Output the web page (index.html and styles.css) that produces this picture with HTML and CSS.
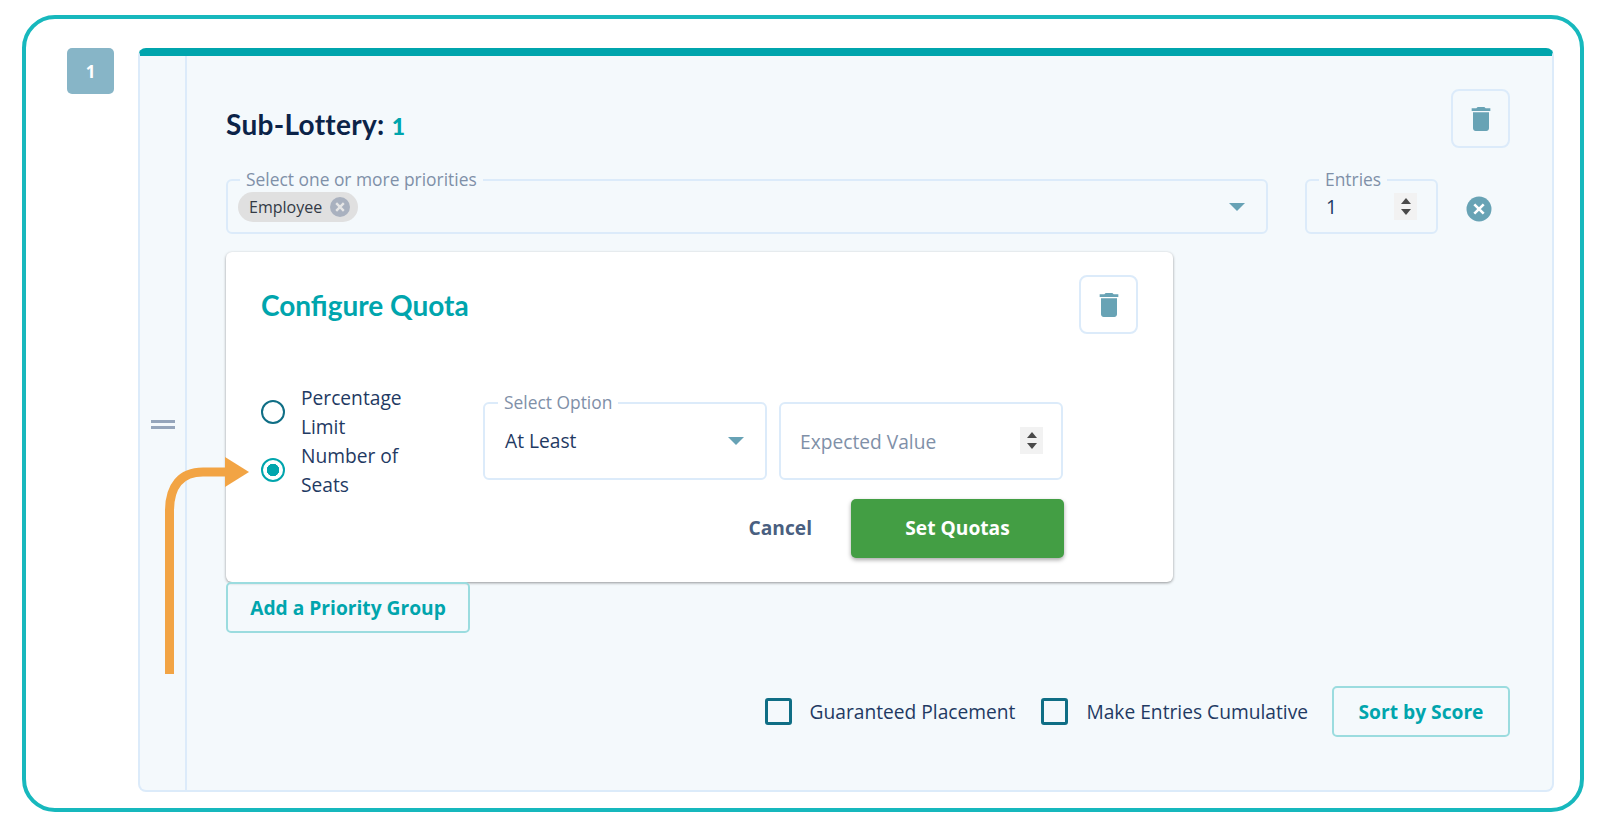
FILE: index.html

```html
<!DOCTYPE html>
<html lang="en">
<head>
    <meta charset="UTF-8">
    <meta name="viewport" content="width=device-width, initial-scale=1.0">
    <title>Sub-Lottery - Configure Quota</title>
    <link rel="stylesheet" href="styles.css">
</head>
<body>
    <div class="frame">
        <div class="order-badge">1</div>

        <div class="panel">
            <div class="handle-col">
                <div class="handle"></div>
            </div>

            <div class="panel-main">
                <div class="panel-head">
                    <h2 class="panel-title">Sub-Lottery: <span class="panel-num">1</span></h2>
                    <button class="icon-btn">
                        <svg viewBox="0 0 24 24" class="trash"><path d="M6 19c0 1.1.9 2 2 2h8c1.1 0 2-.9 2-2V7H6v12zM19 4h-3.5l-1-1h-5l-1 1H5v2h14V4z"/></svg>
                    </button>
                </div>

                <div class="priority-row">
                    <div class="field field-priorities">
                        <span class="field-label">Select one or more priorities</span>
                        <span class="chip">
                            Employee
                            <svg viewBox="0 0 20 20" class="chip-x"><circle cx="10" cy="10" r="10"/><path d="M6.2 6.2l7.6 7.6M13.8 6.2l-7.6 7.6"/></svg>
                        </span>
                        <span class="caret"></span>
                    </div>
                    <div class="field field-entries">
                        <span class="field-label">Entries</span>
                        <span class="field-value">1</span>
                        <span class="spinner"><i class="up"></i><i class="down"></i></span>
                    </div>
                    <svg viewBox="0 0 26 26" class="remove-x"><circle cx="13" cy="13" r="12.5"/><path d="M8.3 8.3l9.4 9.4M17.7 8.3l-9.4 9.4"/></svg>
                </div>

                <div class="quota-card">
                    <div class="quota-head">
                        <h2 class="quota-title">Configure Quota</h2>
                        <button class="icon-btn icon-btn-white">
                            <svg viewBox="0 0 24 24" class="trash"><path d="M6 19c0 1.1.9 2 2 2h8c1.1 0 2-.9 2-2V7H6v12zM19 4h-3.5l-1-1h-5l-1 1H5v2h14V4z"/></svg>
                        </button>
                    </div>

                    <div class="quota-body">
                        <div class="quota-row">
                            <div class="radio-group">
                                <label class="radio-item">
                                    <span class="radio"></span>
                                    <span class="radio-text">Percentage Limit</span>
                                </label>
                                <label class="radio-item">
                                    <span class="radio radio-on"></span>
                                    <span class="radio-text">Number of Seats</span>
                                </label>
                            </div>
                            <div class="field field-quota">
                                <span class="field-label label-white">Select Option</span>
                                <span class="field-value">At Least</span>
                                <span class="caret"></span>
                            </div>
                            <div class="field field-quota field-expected">
                                <span class="placeholder">Expected Value</span>
                                <span class="spinner"><i class="up"></i><i class="down"></i></span>
                            </div>
                        </div>
                        <div class="quota-actions">
                            <button class="btn-cancel">Cancel</button>
                            <button class="btn-set">Set Quotas</button>
                        </div>
                    </div>
                </div>

                <button class="btn-outline btn-add">Add a Priority Group</button>

                <div class="panel-foot">
                    <label class="check-item check-first"><span class="check"></span>Guaranteed Placement</label>
                    <label class="check-item"><span class="check"></span>Make Entries Cumulative</label>
                    <button class="btn-outline btn-sort">Sort by Score</button>
                </div>
            </div>
        </div>

        <!-- annotation drawn over the screenshot -->
        <svg class="arrow" viewBox="0 0 100 225">
            <path class="arrow-line" d="M18.5 223V60C18.5 35 30 21 52 21H76"/>
            <path class="arrow-head" d="M74 6L98 21L74 36Z"/>
        </svg>
    </div>
</body>
</html>
```

FILE: styles.css

```css
* {
    margin: 0;
    padding: 0;
    box-sizing: border-box;
}

body {
    font-family: 'Open Sans', 'Liberation Sans', sans-serif;
    background: #fff;
    color: #1f3a63;
    height: 827px;
    overflow: hidden;
}

button {
    font-family: inherit;
    cursor: pointer;
}

.frame {
    position: relative;
    display: flex;
    align-items: flex-start;
    width: 1562px;
    height: 797px;
    margin: 15px 0 0 22px;
    padding: 29px 26px 0 41px;
    border: 4px solid #17b8bd;
    border-radius: 33px;
}

.order-badge {
    flex: none;
    width: 47px;
    height: 46px;
    margin-right: 24px;
    display: flex;
    align-items: center;
    justify-content: center;
    background: #87b5c7;
    border-radius: 5px;
    color: #fff;
    font-size: 17px;
    font-weight: 700;
}

.panel {
    flex: 1;
    display: flex;
    height: 744px;
    background: #f4f9fc;
    border: 2px solid #dcebfa;
    border-top: 8px solid #00a5ad;
    border-radius: 8px;
}

.handle-col {
    flex: none;
    width: 47px;
    display: flex;
    align-items: center;
    justify-content: center;
    border-right: 2px solid #dcebfa;
    padding-top: 2px;
}

.handle {
    width: 24px;
    height: 9px;
    border-top: 3px solid #95a5bb;
    border-bottom: 3px solid #95a5bb;
}

.panel-main {
    flex: 1;
    padding: 33px 42px 0 39px;
}

.panel-head {
    display: flex;
    justify-content: space-between;
    align-items: center;
    height: 59px;
}

.panel-title {
    font-family: 'Lato', sans-serif;
    font-size: 28px;
    font-weight: 700;
    letter-spacing: 0.3px;
    color: #0b2348;
    margin-top: 11px;
}

.panel-num {
    color: #00a5ad;
    font-size: 23px;
    font-weight: 900;
}

.icon-btn {
    width: 59px;
    height: 59px;
    display: flex;
    align-items: center;
    justify-content: center;
    background: transparent;
    border: 2px solid #dcebfa;
    border-radius: 8px;
}

.icon-btn-white {
    background: #fff;
}

.trash {
    width: 32px;
    height: 32px;
    fill: #68a3b5;
}

.priority-row {
    display: flex;
    align-items: flex-start;
    margin-top: 31px;
}

.field {
    position: relative;
    display: flex;
    align-items: center;
    border: 2px solid #dcebfa;
    border-radius: 6px;
    font-size: 19.2px;
}

.field-label {
    position: absolute;
    top: -13px;
    padding: 0 6px;
    background: #f4f9fc;
    color: #7f90a8;
    font-size: 17.4px;
    line-height: 22px;
}

.label-white {
    background: #fff;
    left: 13px;
}

.field-priorities {
    width: 1042px;
    height: 55px;
    padding-left: 10px;
}

.field-priorities .field-label {
    left: 12px;
}

.field-entries {
    width: 133px;
    height: 55px;
    margin-left: 37px;
    padding-left: 19px;
}

.field-entries .field-label {
    left: 12px;
}

.field-value {
    color: #1f3a63;
    line-height: 1;
}

.chip {
    display: flex;
    align-items: center;
    height: 30px;
    padding: 0 8px 0 11px;
    background: #e0e0e0;
    border-radius: 15px;
    color: #333a45;
    font-size: 16px;
}

.chip-x {
    width: 20px;
    height: 20px;
    margin-left: 8px;
}

.chip-x circle {
    fill: #a9b1bf;
}

.chip-x path {
    stroke: #e6e6e6;
    stroke-width: 2.4;
    fill: none;
}

.caret {
    position: absolute;
    top: 50%;
    right: 21px;
    margin-top: -4px;
    border-left: 8px solid transparent;
    border-right: 8px solid transparent;
    border-top: 8px solid #67a2b5;
}

.spinner {
    position: absolute;
    top: 50%;
    right: 19px;
    width: 23px;
    height: 27px;
    margin-top: -14px;
    display: flex;
    flex-direction: column;
    align-items: center;
    justify-content: center;
    gap: 5px;
    background: #f2f2f2;
}

.spinner i {
    display: block;
    border-left: 5px solid transparent;
    border-right: 5px solid transparent;
}

.spinner .up {
    border-bottom: 6px solid #4a4a4a;
}

.spinner .down {
    border-top: 6px solid #4a4a4a;
}

.remove-x {
    width: 26px;
    height: 26px;
    margin: 17px 0 0 28px;
}

.remove-x circle {
    fill: #68a3b5;
}

.remove-x path {
    stroke: #fff;
    stroke-width: 2.6;
    fill: none;
}

.quota-card {
    width: 947px;
    height: 330px;
    margin-top: 18px;
    padding: 23px 35px 0;
    background: #fff;
    border-radius: 6px;
    box-shadow: 0 1px 3px rgba(0, 0, 0, 0.4);
}

.quota-head {
    display: flex;
    justify-content: space-between;
    align-items: center;
    height: 59px;
}

.quota-title {
    font-family: 'Lato', sans-serif;
    font-size: 28px;
    font-weight: 700;
    color: #00a5ad;
}

.quota-body {
    width: 803px;
    margin-top: 49px;
}

.quota-row {
    display: flex;
    align-items: flex-start;
    height: 116px;
}

.radio-group {
    flex: none;
    width: 222px;
    display: flex;
    flex-direction: column;
}

.radio-item {
    display: flex;
    align-items: center;
    gap: 16px;
}

.radio-text {
    width: 125px;
    font-size: 19.2px;
    line-height: 29px;
    color: #1f3a63;
}

.radio {
    flex: none;
    width: 24px;
    height: 24px;
    border: 2.5px solid #0f6e85;
    border-radius: 50%;
}

.radio-on {
    border-color: #00a5ad;
    background: radial-gradient(circle, #00a5ad 0 6px, #fff 6.5px);
}

.field-quota {
    width: 284px;
    height: 78px;
    margin: 19px 12px 0 0;
    padding-left: 20px;
}

.field-expected {
    margin-right: 0;
    padding-left: 19px;
}

.field-expected .spinner {
    right: 18px;
}

.placeholder {
    color: #7f90a8;
}

.quota-actions {
    display: flex;
    justify-content: flex-end;
    align-items: center;
    gap: 39px;
}

.btn-cancel {
    background: none;
    border: none;
    color: #4a5f80;
    font-size: 19.2px;
    font-weight: 700;
    padding-bottom: 2px;
}

.btn-set {
    width: 213px;
    height: 59px;
    padding-bottom: 2px;
    background: #439e44;
    border: none;
    border-radius: 5px;
    color: #fff;
    font-size: 19.2px;
    font-weight: 700;
    box-shadow: 0 2px 4px rgba(0, 0, 0, 0.35);
}

.btn-outline {
    background: transparent;
    border: 2px solid #9bdcdf;
    border-radius: 5px;
    color: #00a5ad;
    font-size: 19.2px;
    font-weight: 700;
}

.btn-add {
    display: block;
    width: 244px;
    height: 51px;
}

.panel-foot {
    display: flex;
    justify-content: flex-end;
    align-items: center;
    margin-top: 53px;
}

.check-item {
    display: flex;
    align-items: center;
    gap: 18px;
    font-size: 19.2px;
    color: #1f3a63;
    margin-right: 24px;
}

.check-first {
    margin-right: 26px;
}

.check {
    width: 27px;
    height: 27px;
    border: 3px solid #0f6e85;
    border-radius: 3px;
}

.btn-sort {
    width: 178px;
    height: 51px;
}

.arrow {
    position: absolute;
    left: 125px;
    top: 432px;
    width: 100px;
    height: 225px;
}

.arrow-line {
    fill: none;
    stroke: #f2a444;
    stroke-width: 9;
}

.arrow-head {
    fill: #f2a444;
}
```
